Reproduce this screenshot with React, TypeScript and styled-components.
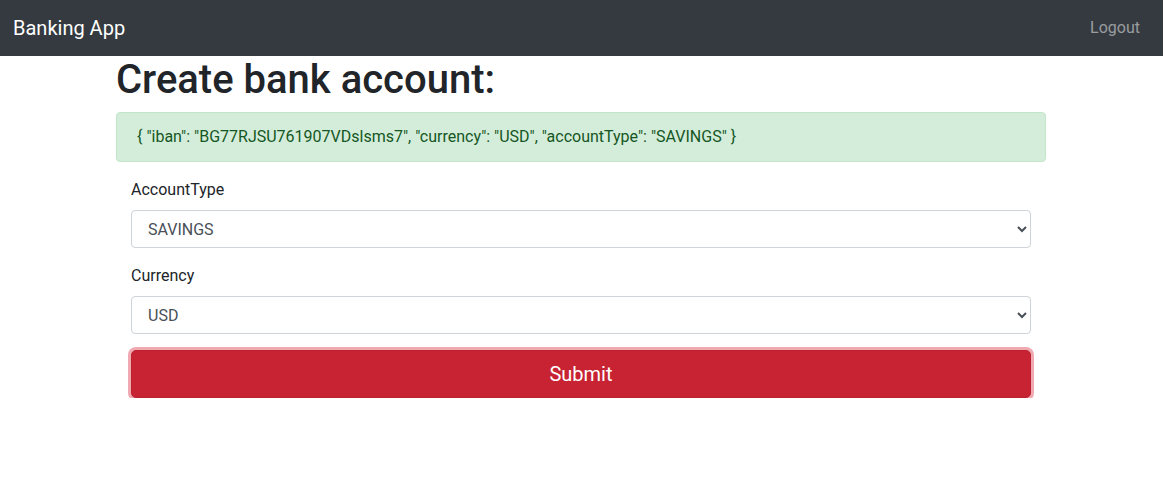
import React from "react";
import styled, { createGlobalStyle } from "styled-components";

const Global = createGlobalStyle`
  *, *::before, *::after { box-sizing: border-box; }
  body {
    margin: 0;
    font-family: Roboto, "Helvetica Neue", Arial, sans-serif;
    font-size: 16px;
    line-height: 1.5;
    color: #212529;
    background: #fff;
  }
`;

const Navbar = styled.nav`
  display: flex;
  align-items: center;
  justify-content: space-between;
  height: 56px;
  padding: 8px 15px 8px 13px;
  background: #343a40;
`;

const Brand = styled.a`
  font-size: 20px;
  line-height: 30px;
  padding: 5px 0;
  color: #fff;
  text-decoration: none;
`;

const NavLink = styled.a`
  padding: 8px;
  font-size: 16px;
  line-height: 24px;
  color: rgba(255, 255, 255, 0.5);
  text-decoration: none;
`;

const Container = styled.main`
  max-width: 960px;
  margin: 0 auto;
  padding: 0 15.5px 0 14.5px;
`;

const Title = styled.h1`
  margin: 0 0 8px;
  font-size: 40px;
  font-weight: 500;
  line-height: 1.2;
`;

const Alert = styled.div`
  padding: 12px 20px;
  margin-bottom: 16px;
  border: 1px solid #c3e6cb;
  border-radius: 4px;
  background: #d4edda;
  color: #155724;
`;

const Form = styled.form`
  padding: 0 15px;
`;

const Group = styled.div`
  margin-bottom: 16px;
`;

const Label = styled.label`
  display: block;
  margin-bottom: 8px;
`;

const Select = styled.select`
  display: block;
  width: 100%;
  height: 38px;
  padding: 6px 12px;
  font-family: inherit;
  font-size: 16px;
  line-height: 1.5;
  color: #495057;
  background: #fff;
  border: 1px solid #ced4da;
  border-radius: 4px;
`;

const SubmitButton = styled.button`
  display: block;
  width: 100%;
  height: 48px;
  padding: 8px 16px;
  font-family: inherit;
  font-size: 20px;
  line-height: 1.5;
  color: #fff;
  background: #c82333;
  border: 1px solid #bd2130;
  border-radius: 5px;
  box-shadow: 0 0 0 3px rgba(225, 83, 97, 0.5);
  cursor: pointer;
`;

export default function App() {
  return (
    <>
      <Global />
      <Navbar>
        <Brand href="#">Banking App</Brand>
        <NavLink href="#">Logout</NavLink>
      </Navbar>
      <Container>
        <Title>Create bank account:</Title>
        <Alert>
          {'{ "iban": "BG77RJSU761907VDslsms7", "currency": "USD", "accountType": "SAVINGS" }'}
        </Alert>
        <Form onSubmit={(e) => e.preventDefault()}>
          <Group>
            <Label htmlFor="accountType">AccountType</Label>
            <Select id="accountType" defaultValue="SAVINGS">
              <option value="SAVINGS">SAVINGS</option>
              <option value="CHECKING">CHECKING</option>
            </Select>
          </Group>
          <Group>
            <Label htmlFor="currency">Currency</Label>
            <Select id="currency" defaultValue="USD">
              <option value="USD">USD</option>
              <option value="EUR">EUR</option>
              <option value="BGN">BGN</option>
            </Select>
          </Group>
          <SubmitButton type="submit">Submit</SubmitButton>
        </Form>
      </Container>
    </>
  );
}
